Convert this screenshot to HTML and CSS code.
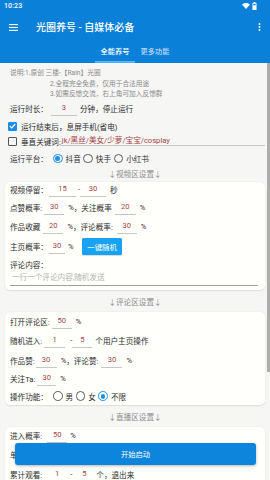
FILE: index.html
```html
<!DOCTYPE html>
<html lang="zh-CN">
<head>
<meta charset="utf-8">
<title>光圈养号</title>
<link rel="stylesheet" href="styles.css">
</head>
<body>
<div class="app">
  <header class="appbar">
    <div class="status">
      <span class="time">10:23</span>
      <span class="sys-icons">
        <svg class="wifi" width="8" height="6" viewBox="0 0 8 6"><path d="M0 1.5 Q4 -1.3 8 1.5 L4 6 Z" fill="#fff"/></svg>
        <svg class="battery" width="5" height="8" viewBox="0 0 5 8"><rect x="1.6" y="0" width="1.8" height="1" fill="#fff"/><rect x="0.9" y="1.4" width="3.2" height="6.2" fill="none" stroke="#fff" stroke-width="0.8"/><rect x="0.9" y="3.2" width="3.2" height="4.4" fill="#fff"/></svg>
      </span>
    </div>
    <div class="toolbar">
      <svg class="menu" width="9" height="7" viewBox="0 0 9 7"><rect x="0" y="0" width="9" height="1.1" fill="#fff"/><rect x="0" y="2.9" width="9" height="1.1" fill="#fff"/><rect x="0" y="5.8" width="9" height="1.1" fill="#fff"/></svg>
      <h1 class="title">光圈养号 - 自媒体必备</h1>
      <svg class="more" width="3" height="8" viewBox="0 0 3 8"><circle cx="1.5" cy="1" r="0.95" fill="#fff"/><circle cx="1.5" cy="4" r="0.95" fill="#fff"/><circle cx="1.5" cy="7" r="0.95" fill="#fff"/></svg>
    </div>
    <nav class="tabs">
      <span class="tab active">全能养号</span>
      <span class="tab">更多功能</span>
    </nav>
  </header>

  <main class="content">
    <div class="intro">
      <p class="desc">说明:1.原创 三楼-【Rain】光圈</p>
      <p class="desc indent">2.全程完全免费，仅用于合法用途</p>
      <p class="desc indent">3.如需反馈交流，右上角可加入反馈群</p>

      <div class="row h17">
        <span>运行时长：</span><span class="in w26 ml3">3</span><span class="ml3">分钟，停止运行</span>
      </div>
      <div class="row h19">
        <span class="check on"><svg width="7" height="6" viewBox="0 0 7 6"><path d="M0.8 3 L2.7 4.9 L6.2 1" fill="none" stroke="#fff" stroke-width="1.2"/></svg></span>
        <span class="ml4">运行结束后，息屏手机(省电)</span>
      </div>
      <div class="row h12">
        <span class="check"></span>
        <span class="ml4">垂直关键词:</span><span class="kw">jk/黑丝/美女/少萝/宝宝/cosplay</span>
      </div>
      <div class="row h22">
        <span>运行平台：</span>
        <span class="opt ml5"><span class="radio on"></span><span class="ml3">抖音</span></span>
        <span class="opt"><span class="radio"></span><span class="ml3">快手</span></span>
        <span class="opt"><span class="radio"></span><span class="ml3">小红书</span></span>
      </div>
    </div>

    <div class="sec-title first">↓视频区设置↓</div>
    <section class="card">
      <div class="row h15">
        <span>视频停留：</span><span class="in w27 ml1">15</span><span class="ml2">-</span><span class="in w26">30</span><span class="ml4">秒</span>
      </div>
      <div class="row h21">
        <span>点赞概率:</span><span class="in w20 ml2">30</span><span class="ml4">%</span><span>，关注概率</span><span class="in w21 ml3">20</span><span class="ml4">%</span>
      </div>
      <div class="row h17">
        <span>作品收藏</span><span class="in w20 ml3">20</span><span class="ml4">%</span><span>，评论概率:</span><span class="in w20 ml4">30</span><span class="ml4">%</span>
      </div>
      <div class="row h22">
        <span>主页概率：</span><span class="in w16 ml1">30</span><span class="ml3">%</span><button class="rand">一键随机</button>
      </div>
      <div class="row h14">
        <span>评论内容：</span>
      </div>
      <div class="row h15">
        <span class="area">一行一个评论内容,随机发送</span>
      </div>
    </section>

    <div class="sec-title">↓评论区设置↓</div>
    <section class="card">
      <div class="row h18">
        <span>打开评论区:</span><span class="in w20 ml2">50</span><span class="ml4">%</span>
      </div>
      <div class="row h21">
        <span>随机进入:</span><span class="in w21 ml2">1</span><span class="ml5">-</span><span class="in w20">5</span><span class="ml3">个用户主页操作</span>
      </div>
      <div class="row h18">
        <span>作品赞:</span><span class="in w21 ml1">30</span><span class="ml4">%</span><span>，评论赞:</span><span class="in w21 ml3">30</span><span class="ml4">%</span>
      </div>
      <div class="row h18h">
        <span>关注Ta:</span><span class="in w19 ml2">30</span><span class="ml4">%</span>
      </div>
      <div class="row h17h">
        <span>操作功能：</span>
        <span class="opt ml5"><span class="radio"></span><span class="ml3">男</span></span>
        <span class="opt"><span class="radio"></span><span class="ml3">女</span></span>
        <span class="opt"><span class="radio on"></span><span class="ml3">不限</span></span>
      </div>
    </section>

    <div class="sec-title">↓直播区设置↓</div>
    <section class="card">
      <div class="row h17h">
        <span>进入概率:</span><span class="in w20 ml5">50</span><span class="ml3">%</span>
      </div>
      <div class="row h19h">
        <span>单次观看:</span><span class="in w20 ml5">10</span><span class="ml3">-</span><span class="in w20">30</span><span class="ml2">秒</span>
      </div>
      <div class="row h20">
        <span>累计观看:</span><span class="in w20 ml5">1</span><span class="ml3">-</span><span class="in w20 ml2">5</span><span class="ml2">个，退出来</span>
      </div>
    </section>
  </main>

  <button class="start">开始启动</button>
  <div class="scrollbar"></div>
</div>
</body>
</html>
```

FILE: styles.css
```css
* { box-sizing: border-box; }
html, body {
  margin: 0;
  padding: 0;
  width: 270px;
  height: 480px;
  overflow: hidden;
}
body {
  font-family: Roboto, "Noto Sans CJK SC", sans-serif;
  font-size: 7.6px;
  color: #2c2c2c;
  background: #f6f6f5;
}
.app {
  position: relative;
  width: 270px;
  height: 480px;
  overflow: hidden;
}

/* header */
.appbar {
  background: #0b80d9;
  color: #fff;
}
.status {
  height: 12px;
  display: flex;
  align-items: center;
  justify-content: space-between;
  padding: 0 13px 0 4px;
}
.time {
  font-size: 7px;
  font-weight: 500;
  letter-spacing: 0.1px;
}
.sys-icons {
  display: flex;
  align-items: center;
  gap: 2.5px;
}
.wifi { display: block; }
.battery { display: block; }
.toolbar {
  height: 29px;
  display: flex;
  align-items: center;
  padding: 0 9px 0 9px;
}
.menu { display: block; margin-top: 1px; }
.title {
  margin: 0 0 0 18px;
  font-size: 10px;
  font-weight: 500;
  flex: 1;
  letter-spacing: 0;
}
.more { display: block; margin-top: 1px; }
.tabs {
  height: 22px;
  display: flex;
  justify-content: center;
}
.tab {
  width: 40px;
  text-align: center;
  font-size: 7.2px;
  font-weight: 500;
  line-height: 22px;
  color: rgba(255, 255, 255, 0.72);
  border-bottom: 2px solid transparent;
}
.tab.active {
  color: #fff;
  border-bottom-color: #58b3f3;
}

/* content */
.intro {
  padding: 5px 5px 0 10px;
}
.desc {
  margin: 0;
  font-size: 6.7px;
  line-height: 10.5px;
  height: 10.5px;
  color: #8a8a8a;
  white-space: nowrap;
}
.desc.indent { padding-left: 40px; }

.row {
  display: flex;
  align-items: center;
  white-space: nowrap;
}
.h12 { height: 12px; }
.h14 { height: 14px; }
.h15 { height: 15px; }
.h17 { height: 17px; }
.h17h { height: 17.5px; }
.h18 { height: 18px; }
.h18h { height: 18.5px; }
.h19 { height: 19px; }
.h19h { height: 19.5px; }
.h20 { height: 20px; }
.h21 { height: 21px; }
.h22 { height: 22px; }

.ml1 { margin-left: 1px; }
.ml2 { margin-left: 2px; }
.ml3 { margin-left: 3px; }
.ml4 { margin-left: 4px; }
.ml5 { margin-left: 5px; }

.in {
  display: inline-block;
  text-align: center;
  line-height: 14px;
  border-bottom: 1px solid #c6c6c6;
  color: #a64647;
}
.w16 { width: 16px; }
.w19 { width: 19px; }
.w20 { width: 20px; }
.w21 { width: 21px; }
.w26 { width: 26px; }
.w27 { width: 27px; }

.check {
  width: 9px;
  height: 9px;
  margin-left: -2px;
  border: 1px solid #555;
  border-radius: 1px;
  display: flex;
  align-items: center;
  justify-content: center;
  flex: none;
}
.check.on {
  background: #1a8ee6;
  border-color: #1a8ee6;
}
.check svg { display: block; }

.kw {
  flex: 1;
  line-height: 8px;
  border-bottom: 1px solid #c6c6c6;
  color: #a24546;
  padding-left: 1.5px;
  margin-left: -0.5px;
}

.opt {
  display: inline-flex;
  align-items: center;
  margin-right: 2.5px;
}
.radio {
  width: 9.6px;
  height: 9.6px;
  border: 1px solid #5a5a5a;
  border-radius: 50%;
  display: flex;
  align-items: center;
  justify-content: center;
  flex: none;
}
.radio.on { border-color: #1f8fe6; }
.radio.on::after {
  content: "";
  width: 4.6px;
  height: 4.6px;
  border-radius: 50%;
  background: #1f8fe6;
}

.sec-title {
  text-align: center;
  height: 22px;
  line-height: 10px;
  padding: 8px 0 4px;
  color: #8d8d8d;
  white-space: nowrap;
}
.sec-title.first {
  height: 12.5px;
  padding: 0 0 2.5px;
}

.card {
  margin: 0 5px;
  padding: 0 7px 0 5px;
  background: #fffffc;
  border-radius: 5px;
  box-shadow: 0 0.5px 1.5px rgba(0, 0, 0, 0.1);
}
.card:first-of-type { padding-bottom: 4px; }

.rand {
  margin-left: 8.5px;
  width: 40px;
  height: 17px;
  border: none;
  border-radius: 1.5px;
  background: #17a3f1;
  color: #fff;
  font-family: inherit;
  font-size: 7.4px;
  padding: 0;
  box-shadow: 0 0.5px 1px rgba(0, 0, 0, 0.15);
}
.area {
  flex: 1;
  line-height: 14px;
  padding-left: 2px;
  border-bottom: 1px solid #9e9e9e;
  color: #b3b3b3;
}

/* overlays */
.start {
  position: absolute;
  left: 15px;
  top: 443px;
  width: 241px;
  height: 22px;
  border: none;
  border-radius: 3px;
  background: #0d85dd;
  color: #fff;
  font-family: inherit;
  font-size: 7.3px;
  padding: 0;
  box-shadow: 0 1px 3px rgba(0, 0, 0, 0.3);
}
.scrollbar {
  position: absolute;
  right: 0;
  top: 63px;
  width: 3px;
  height: 309px;
  background: #adadad;
}
```
